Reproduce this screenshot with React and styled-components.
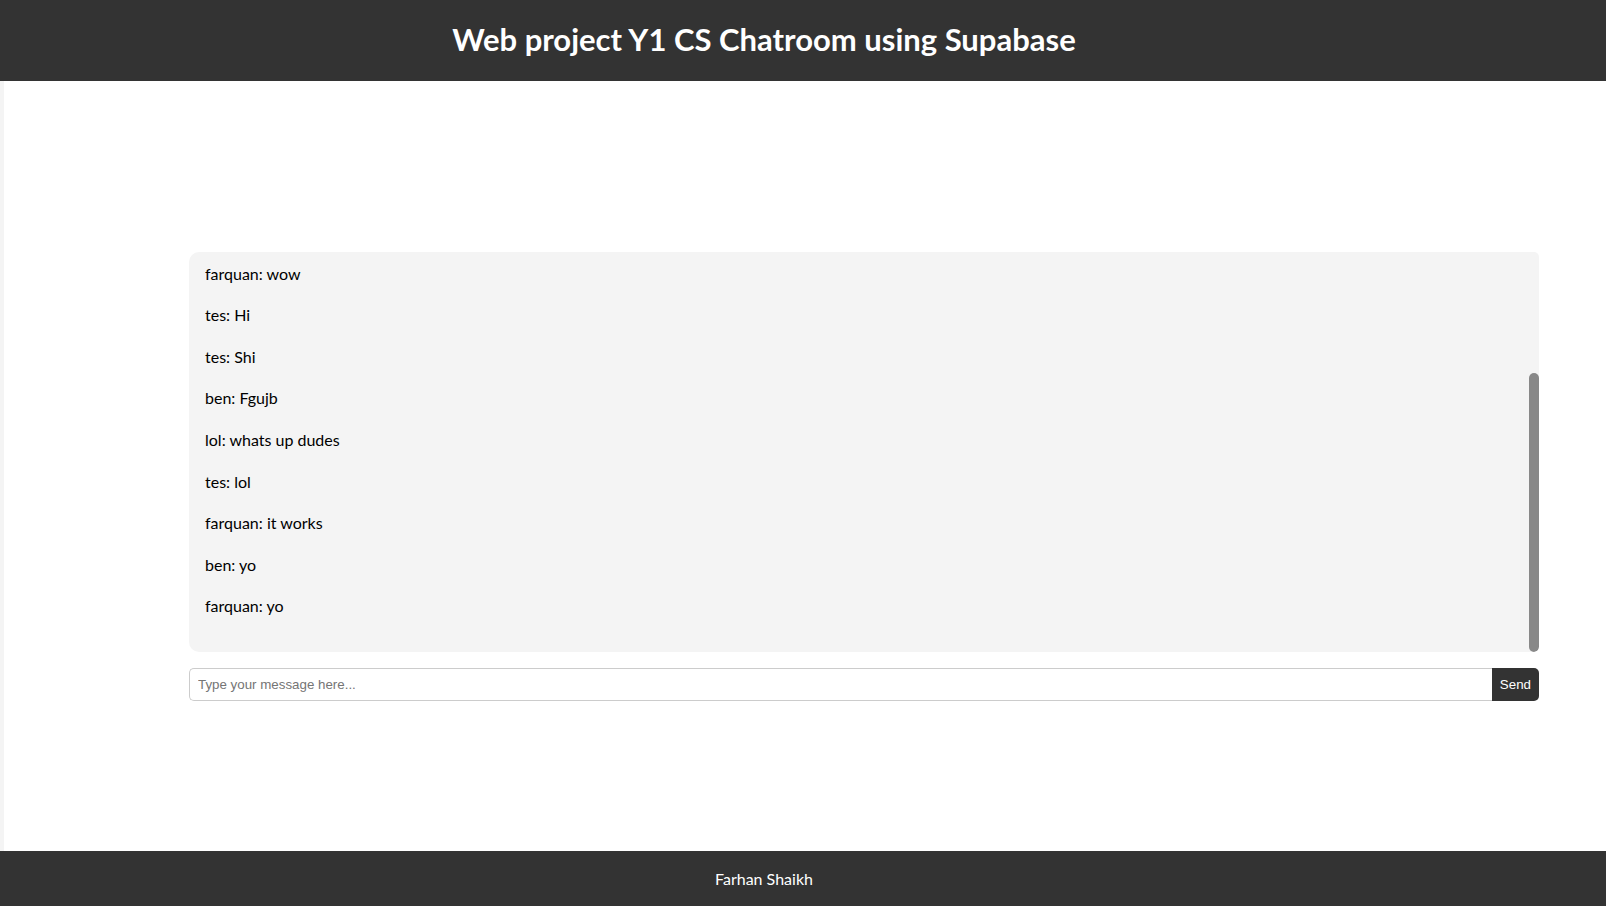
import React from "react";
import styled, { createGlobalStyle } from "styled-components";

const GlobalStyle = createGlobalStyle`
  * {
    box-sizing: border-box;
  }

  body {
    margin: 0;
    background: #fff;
    color: #000;
    font-family: Lato, "Open Sans", sans-serif;
    font-size: 16px;
    line-height: 1.6;
  }
`;

const Page = styled.div`
  display: flex;
  flex-direction: column;
  min-height: 100vh;
`;

const Bar = styled.div`
  display: flex;
  align-items: center;
  justify-content: center;
  padding: 16px 78px 16px 0;
  background: #333;
  color: #fff;
`;

const Title = styled.h1`
  margin: 0 0 2px;
  font-size: 31px;
  font-weight: 700;
  line-height: 47px;
`;

const Credit = styled.p`
  margin: 0;
  line-height: 23px;
`;

const Body = styled.div`
  display: flex;
  flex: 1;
`;

const SideEdge = styled.div`
  width: 4px;
  background: #f4f4f4;
`;

const Main = styled.main`
  display: flex;
  flex: 1;
  flex-direction: column;
  justify-content: center;
  gap: 16px;
  padding: 21px 67px 0 185px;
`;

const ChatBox = styled.section`
  display: flex;
  height: 400px;
  overflow: hidden;
  border-radius: 10px 5px 5px 10px;
  background: #f4f4f4;
`;

const MessageList = styled.div`
  display: flex;
  flex: 1;
  flex-direction: column;
  justify-content: flex-end;
  padding: 0 16px 17px;
`;

const Message = styled.p`
  margin: 0 0 16px;
`;

const ScrollTrack = styled.div`
  display: flex;
  align-items: flex-end;
  width: 10px;
`;

const ScrollThumb = styled.div`
  width: 100%;
  height: 279px;
  border-radius: 5px;
  background: #888;
`;

const Composer = styled.form`
  display: flex;
  height: 33px;
`;

const MessageInput = styled.input`
  flex: 1;
  min-width: 0;
  padding: 8px;
  border: 1px solid #ccc;
  border-right: 0;
  border-radius: 5px 0 0 5px;
  background: #fff;
  font-family: "Liberation Sans", Arial, sans-serif;

  &::placeholder {
    color: #757575;
  }
`;

const SendButton = styled.button`
  padding: 0 8px;
  border: 0;
  border-radius: 0 5px 5px 0;
  background: #333;
  color: #fff;
  font-family: "Liberation Sans", Arial, sans-serif;
`;

const messages = [
  { user: "farquan", text: "wow" },
  { user: "tes", text: "Hi" },
  { user: "tes", text: "Shi" },
  { user: "ben", text: "Fgujb" },
  { user: "lol", text: "whats up dudes" },
  { user: "tes", text: "lol" },
  { user: "farquan", text: "it works" },
  { user: "ben", text: "yo" },
  { user: "farquan", text: "yo" },
];

export default function App() {
  return (
    <>
      <GlobalStyle />
      <Page>
        <Bar as="header">
          <Title>Web project Y1 CS Chatroom using Supabase</Title>
        </Bar>
        <Body>
          <SideEdge />
          <Main>
            <ChatBox>
              <MessageList>
                {messages.map(({ user, text }, i) => (
                  <Message key={i}>
                    {user}: {text}
                  </Message>
                ))}
              </MessageList>
              <ScrollTrack>
                <ScrollThumb />
              </ScrollTrack>
            </ChatBox>
            <Composer onSubmit={(e) => e.preventDefault()}>
              <MessageInput
                type="text"
                aria-label="Message"
                placeholder="Type your message here..."
              />
              <SendButton type="submit">Send</SendButton>
            </Composer>
          </Main>
        </Body>
        <Bar as="footer">
          <Credit>Farhan Shaikh</Credit>
        </Bar>
      </Page>
    </>
  );
}
